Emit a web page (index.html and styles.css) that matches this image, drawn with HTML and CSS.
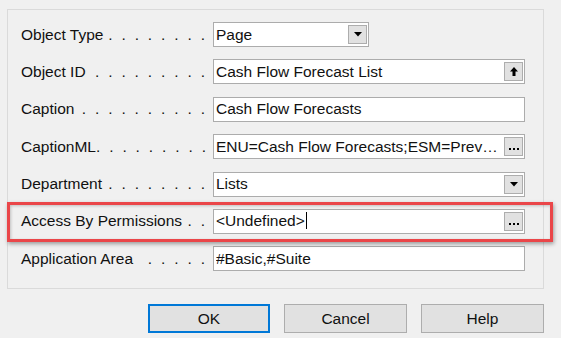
FILE: index.html
```html
<!DOCTYPE html>
<html>
<head>
  <meta charset="utf-8"/>
  <title>Page Properties</title>
  <link rel="stylesheet" href="styles.css">
</head>
<body>
  <div class="dialog">
    <div class="panel">
      <div class="row">
        <label class="name"><span>Object Type</span><span class="dots">. . . . . . . .</span></label>
        <div class="field short">
          <span class="value">Page</span>
          <span class="pick">
            <svg width="8" height="5" viewBox="0 0 8 5"><path d="M0 0h8L4 4.5z" fill="#000"/></svg>
          </span>
        </div>
      </div>

      <div class="row">
        <label class="name"><span>Object ID</span><span class="dots">. . . . . . . . .</span></label>
        <div class="field">
          <span class="value">Cash Flow Forecast List</span>
          <span class="pick">
            <svg width="8" height="9" viewBox="0 0 8 9"><path d="M4 0L8 4.5H5.5V9h-3V4.5H0z" fill="#000"/></svg>
          </span>
        </div>
      </div>

      <div class="row">
        <label class="name"><span>Caption</span><span class="dots">. . . . . . . . . .</span></label>
        <div class="field">
          <span class="value">Cash Flow Forecasts</span>
        </div>
      </div>

      <div class="row">
        <label class="name"><span>CaptionML</span><span class="dots">. . . . . . . . .</span></label>
        <div class="field">
          <span class="value">ENU=Cash Flow Forecasts;ESM=Prev…</span>
          <span class="pick more">
            <svg width="10" height="2" viewBox="0 0 10 2"><path d="M0 0h2v2H0zM4 0h2v2H4zM8 0h2v2H8z" fill="#000"/></svg>
          </span>
        </div>
      </div>

      <div class="row">
        <label class="name"><span>Department</span><span class="dots">. . . . . . . .</span></label>
        <div class="field">
          <span class="value">Lists</span>
          <span class="pick">
            <svg width="8" height="5" viewBox="0 0 8 5"><path d="M0 0h8L4 4.5z" fill="#000"/></svg>
          </span>
        </div>
      </div>

      <div class="row marked">
        <label class="name"><span>Access By Permissions</span><span class="dots">. .</span></label>
        <div class="field">
          <span class="value">&lt;Undefined&gt;<span class="caret"></span></span>
          <span class="pick more">
            <svg width="10" height="2" viewBox="0 0 10 2"><path d="M0 0h2v2H0zM4 0h2v2H4zM8 0h2v2H8z" fill="#000"/></svg>
          </span>
        </div>
      </div>

      <div class="row">
        <label class="name"><span>Application Area</span><span class="dots">. . . . .</span></label>
        <div class="field">
          <span class="value">#Basic,#Suite</span>
        </div>
      </div>
    </div>

    <div class="actions">
      <button class="ok">OK</button>
      <button>Cancel</button>
      <button>Help</button>
    </div>
  </div>
</body>
</html>
```

FILE: styles.css
```css
body {
  margin: 0;
  background: #f0f0f0;
  font-family: "Liberation Sans", Arial, sans-serif;
  font-size: 15.5px;
  color: #000;
}
.dialog {
  padding: 9px 0 0 7px;
  width: 537px;
}
.panel {
  box-sizing: border-box;
  width: 537px;
  height: 280px;
  border: 1px solid #dadada;
  padding: 12px 0 0 13px;
  display: flex;
  flex-direction: column;
  gap: 12.4px;
}
.row {
  display: flex;
  align-items: center;
  height: 25px;
}
.name {
  box-sizing: border-box;
  width: 192px;
  padding-right: 8px;
  display: flex;
  justify-content: space-between;
  white-space: nowrap;
  color: #111;
}
.dots {
  word-spacing: 4.6px;
}
.field {
  box-sizing: border-box;
  width: 312px;
  height: 25px;
  border: 1px solid #acacac;
  background: #fff;
  display: flex;
  align-items: center;
  padding: 0 1px 0 2px;
  color: #111;
}
.field.short {
  width: 156px;
}
.value {
  flex: 1;
  overflow: hidden;
  white-space: nowrap;
  text-overflow: ellipsis;
}
.pick {
  box-sizing: border-box;
  width: 19px;
  height: 19px;
  border: 1px solid #adadad;
  background: #e1e1e1;
  display: flex;
  align-items: center;
  justify-content: center;
}
.pick.more {
  align-items: flex-end;
  padding-bottom: 5px;
}
.caret {
  display: inline-block;
  width: 0;
  height: 17px;
  border-left: 1px solid #000;
  margin-left: 1px;
  vertical-align: -3px;
}
.marked {
  position: relative;
}
.marked::before {
  content: "";
  position: absolute;
  left: -14px;
  right: -10px;
  top: -7px;
  bottom: -8px;
  border: 3px solid #ea4649;
  box-shadow: 1px 2px 4px rgba(0,0,0,0.35), inset 1px 1px 3px rgba(0,0,0,0.2);
  pointer-events: none;
}
.actions {
  display: flex;
  justify-content: flex-end;
  gap: 14px;
  margin-top: 15px;
}
.actions button {
  box-sizing: border-box;
  width: 123px;
  height: 29px;
  border: 1px solid #adadad;
  background: #e1e1e1;
  font-family: inherit;
  font-size: 15.5px;
  color: #111;
  padding: 0;
}
.actions .ok {
  width: 122px;
  border: 2px solid #0078d7;
}
```
